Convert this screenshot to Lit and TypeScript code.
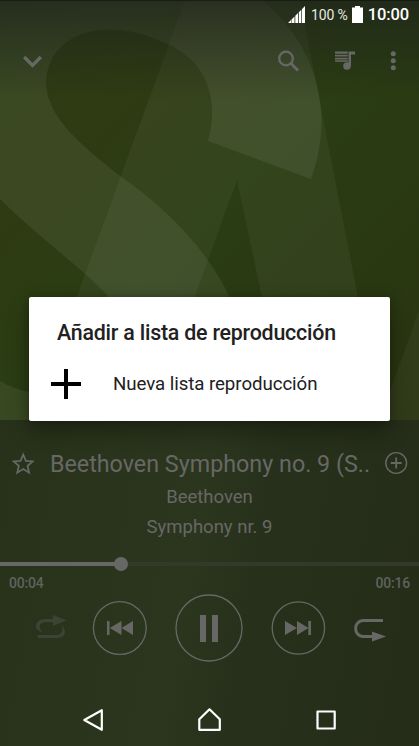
import { LitElement, html, css } from "lit";
import { customElement } from "lit/decorators.js";

@customElement("app-root")
export class AppRoot extends LitElement {
  static styles = css`
    :host {
      display: flex;
      flex-direction: column;
      position: relative;
      width: 419px;
      height: 746px;
      overflow: hidden;
      background: #27301a;
      font-family: Roboto, "Liberation Sans", sans-serif;
      color: #676866;
    }
    svg { display: block; flex: none; }
    .art { position: absolute; left: 0; top: 0; }
    .status {
      position: relative;
      height: 29px;
      display: flex;
      align-items: center;
      justify-content: flex-end;
      padding-right: 10px;
      color: #fff;
    }
    .pct { font-size: 14px; letter-spacing: -0.15px; margin: 0 4px 0 6px; color: #e8e9e6; }
    .time { font-size: 16.5px; font-weight: 500; letter-spacing: -0.1px; margin: 0 0 0 5px; }
    .toolbar {
      position: relative;
      height: 62px;
      display: flex;
      align-items: center;
      padding: 1px 14px 0 21px;
      box-sizing: border-box;
    }
    .grow { flex: 1; }
    .queue { margin: 0 24px 0 33px; }
    .space { height: 329px; flex: none; }
    .player {
      position: relative;
      height: 326px;
      display: flex;
      flex-direction: column;
      background: linear-gradient(100deg, #28311a 0%, #2c351e 45%, #27301a 60%, #252d18 100%);
    }
    .player > * { flex: none; box-sizing: border-box; }
    .song {
      height: 34px;
      margin-top: 26px;
      padding: 0 11px;
      display: flex;
      align-items: center;
      justify-content: space-between;
    }
    .name { font-size: 23.3px; white-space: nowrap; padding: 1px 0 0 1px; }
    .line { height: 30px; line-height: 30px; font-size: 18.5px; text-align: center; }
    .line.first { margin-top: 2px; }
    .seek { height: 16px; margin-top: 14px; display: flex; align-items: center; }
    .done { width: 121px; height: 4px; background: #676866; }
    .knob { width: 14px; height: 14px; margin: 0 -7px; border-radius: 50%; background: #676866; z-index: 1; }
    .rest { flex: 1; height: 4px; background: #343a29; }
    .times {
      display: flex;
      justify-content: space-between;
      padding: 0 9px;
      height: 22px;
      line-height: 23px;
      font-size: 14px;
      letter-spacing: -0.2px;
      font-weight: 500;
      color: #60625e;
    }
    .controls { height: 68px; display: flex; }
    .nav { height: 84px; display: flex; padding-top: 32px; }
    .dialog {
      position: absolute;
      left: 29px;
      top: 297px;
      width: 361px;
      height: 124px;
      box-sizing: border-box;
      border-radius: 2px;
      background: #fff;
      color: #212121;
      box-shadow: 0 10px 22px rgba(0, 0, 0, 0.32), 0 0 7px rgba(0, 0, 0, 0.2);
    }
    .title {
      padding: 21px 28px 0;
      font-size: 21.4px;
      letter-spacing: -0.22px;
      line-height: 30px;
      font-weight: 500;
      white-space: nowrap;
    }
    .option {
      display: flex;
      align-items: center;
      gap: 32px;
      height: 50px;
      box-sizing: border-box;
      margin-top: 11px;
      padding: 0 0 0 22px;
      font-size: 18.7px;
      letter-spacing: -0.07px;
    }
  `;

  render() {
    return html`
      <svg class="art" width="419" height="420" viewBox="0 0 419 420">
        <defs>
          <linearGradient id="base" x1="0" y1="0" x2="1" y2="1">
            <stop offset="0" stop-color="#2a3d15" />
            <stop offset=".25" stop-color="#2f3b12" />
            <stop offset=".5" stop-color="#2a3d13" />
            <stop offset="1" stop-color="#293411" />
          </linearGradient>
          <linearGradient id="shade" x1="0" y1="0" x2="0" y2="1">
            <stop offset="0" stop-color="#1c201c" stop-opacity=".66" />
            <stop offset="1" stop-color="#1c201c" stop-opacity="0" />
          </linearGradient>
        </defs>
        <rect width="419" height="420" fill="url(#base)" />
        <path d="M185 0H300L382 420H288L237 180L150 420H32Z" fill="#fff" fill-opacity=".042" />
        <path
          d="M0 0H262C320 49 334 115 311 179L208 141C219 102 209 61 165 43C104 14 46 33 46 85C49 119 81 145 120 176C173 212 211 257 229 296L250 420H0V381Q15 390 45 396L108 296C81 267 46 244 0 199Z"
          fill="#fff" fill-opacity=".065" />
        <path d="M419 311L386 402V420H419Z" fill="#fff" fill-opacity=".04" />
        <rect width="419" height="100" fill="url(#shade)" />
        <rect width="419" height="1" fill="#000" fill-opacity=".35" />
      </svg>

      <div class="status">
        <svg width="17" height="17" viewBox="0 0 17 17" fill="#fff">
          <path d="M0 17L3 14V17ZM3.500 17V13.500L6.500 10.500V17ZM7.300 17V9.700L10 7V17ZM10.800 17V6.200L13.300 3.700V17ZM14 17V3L17 0V17Z" />
        </svg>
        <span class="pct">100 %</span>
        <svg width="11" height="17" viewBox="0 0 11 17" fill="#fff"><path d="M3 0H8V1.500H11V17H0V1.500H3Z" /></svg>
        <span class="time">10:00</span>
      </div>

      <div class="toolbar">
        <svg width="23" height="24" viewBox="0 0 23 24" fill="none" stroke="#676866" stroke-width="3.3">
          <path d="M3.2 8L11.5 16.3L19.8 8" />
        </svg>
        <span class="grow"></span>
        <svg width="24" height="24" viewBox="0 0 24 24" fill="none" stroke="#676866">
          <circle cx="10" cy="9.500" r="6.8" stroke-width="2.300" /><path d="M15 14.500L22 21.500" stroke-width="2.900" />
        </svg>
        <svg class="queue" width="24" height="24" viewBox="0 0 24 24" fill="#676866">
          <path d="M2 2.500H14.700V4.700H2ZM2 5.700H14.700V7.600H2ZM2 8.700H14.700V10.400H2ZM2 11.200H14.700V12.800H2ZM15.500 2.500H22V5.500H18V17H15.500Z" />
          <circle cx="14" cy="17" r="3.8" />
        </svg>
        <svg width="24" height="24" viewBox="0 0 24 24" fill="#676866">
          <circle cx="12.300" cy="4.700" r="2.5" /><circle cx="12.300" cy="11.700" r="2.5" /><circle cx="12.300" cy="18.700" r="2.5" />
        </svg>
      </div>
      <div class="space"></div>

      <div class="player">
        <div class="song">
          <svg width="24" height="24" viewBox="0 0 24 24" fill="none" stroke="#676866" stroke-width="1.8">
            <path d="M12.200 3.500L14.900 9.800L21.700 10.400L16.600 14.900L18.100 21.700L12.200 18.100L6.300 21.700L7.800 14.900L2.700 10.400L9.500 9.800Z" />
          </svg>
          <span class="name">Beethoven Symphony no. 9 (S..</span>
          <svg width="24" height="24" viewBox="0 0 24 24" fill="none" stroke="#676866">
            <circle cx="12.200" cy="12" r="10.400" stroke-width="1.400" /><path d="M6.700 12H17.700M12.200 6.500V17.500" stroke-width="1.800" />
          </svg>
        </div>
        <div class="line first">Beethoven</div>
        <div class="line">Symphony nr. 9</div>
        <div class="seek">
          <div class="done"></div><div class="knob"></div><div class="rest"></div>
        </div>
        <div class="times"><span>00:04</span><span>00:16</span></div>
        <div class="controls">
          <svg width="419" height="68" viewBox="0 594 419 68" fill="#676866">
            <g fill="none" stroke="#676866" stroke-width="1.3">
              <circle cx="119.8" cy="628" r="26.4" />
              <circle cx="209" cy="628" r="33" />
              <circle cx="298.4" cy="628" r="26.2" />
            </g>
            <path d="M107 621H109.500V635H107ZM109.800 628L121.500 621V635ZM121.500 628L133 621V635Z" />
            <path d="M200 615H206V642H200ZM212 615H218V642H212Z" />
            <path d="M285 621L297 628L285 635ZM297 621L308.500 628L297 635ZM308.300 621H311V635H308.300Z" />
            <g fill="#3c4334">
              <path d="M53 615L66.500 620.500L53 626Z" />
              <path d="M53 619H46C38 619 34.500 624 36.500 628.500C38 631 40 631.800 42.500 631.800C38 628 38.500 622.300 46 622.300H53Z" />
              <path d="M61 625C67 629 66.500 638 57 638H38L37.500 635H56C62 635 64 630 61 625Z" />
            </g>
            <path d="M383 620.500H363.500C353 620.500 353 636.500 363.500 636.500H374" fill="none" stroke="#676866" stroke-width="3" />
            <path d="M372 631.500L386 636.500L372 641.500Z" />
          </svg>
        </div>
        <div class="nav">
          <svg width="419" height="50" viewBox="0 694 419 50" fill="none" stroke="#fff" stroke-width="2.200" stroke-linejoin="round">
            <path d="M101.800 710.200V729.800L84.300 720Z" />
            <path d="M199.300 729.800V719.300L209.500 709.300L219.800 719.300V729.800Z" />
            <path d="M317.500 711.500H334.700V728.500H317.500Z" />
          </svg>
        </div>
      </div>

      <div class="dialog">
        <div class="title">Añadir a lista de reproducción</div>
        <div class="option">
          <svg width="30" height="30" viewBox="0 0 30 30" stroke="#000" stroke-width="4"><path d="M0 15H30M15 0V30" /></svg>
          <span>Nueva lista reproducción</span>
        </div>
      </div>
    `;
  }
}
